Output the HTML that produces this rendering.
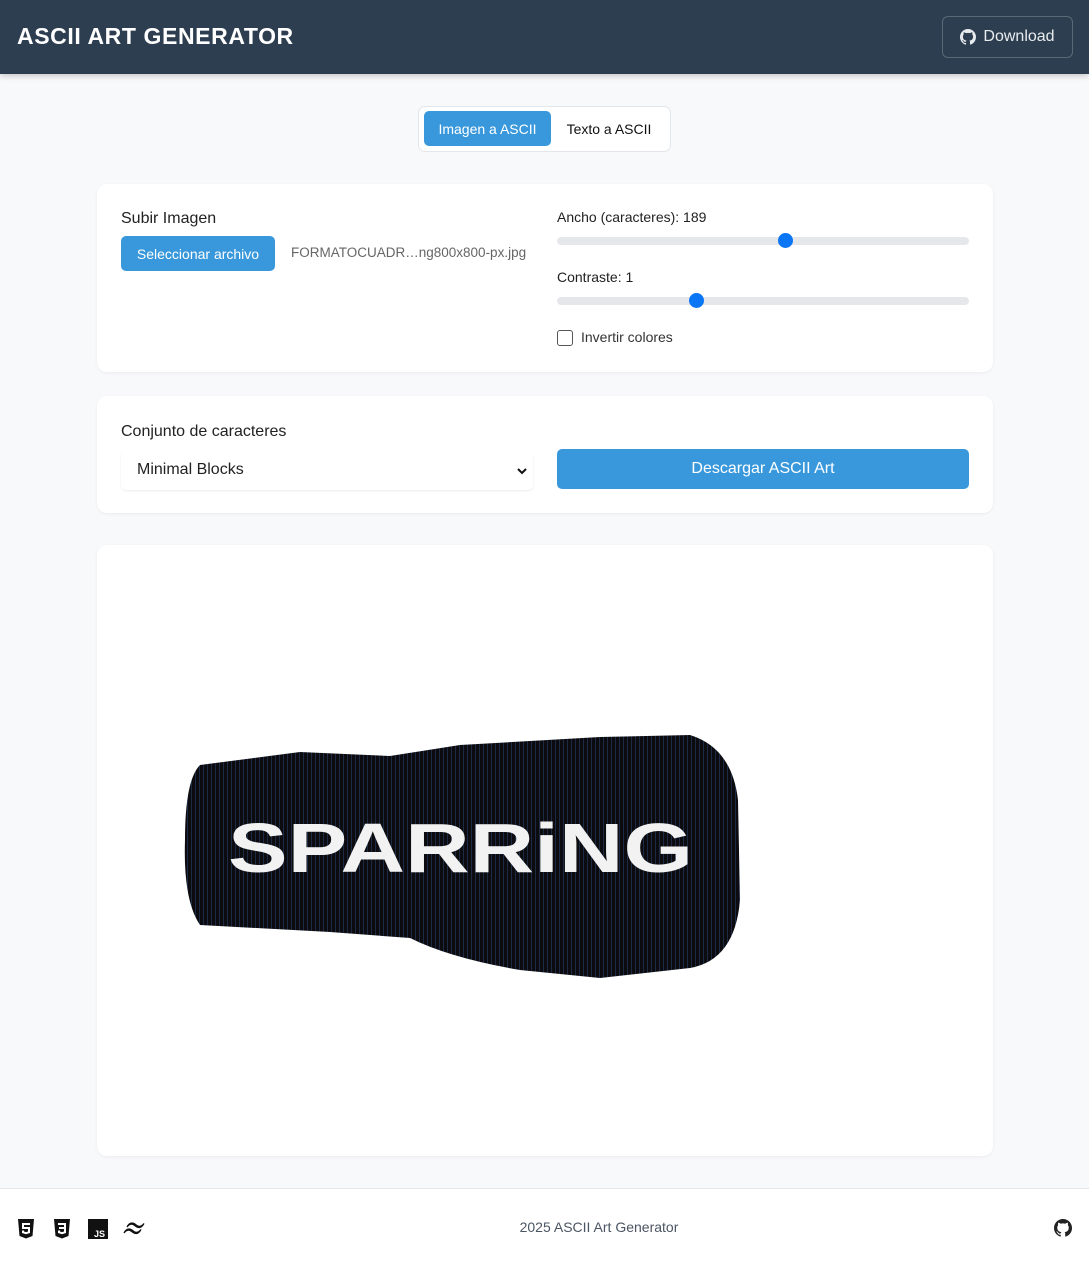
<!DOCTYPE html>
<html><head><meta charset="utf-8">
<style>
*{box-sizing:border-box;margin:0;padding:0}
body{width:1089px;height:1268px;background:#f8f9fb;font-family:"Liberation Sans",sans-serif;color:#222;position:relative;overflow:hidden}
header{position:absolute;left:0;top:0;width:1089px;height:74px;background:#2d3e50;box-shadow:0 2px 6px rgba(0,0,0,.2)}
header h1{position:absolute;left:17px;top:23px;color:#fff;font-size:23px;font-weight:bold;letter-spacing:.6px}
.dl{position:absolute;left:942px;top:16px;width:131px;height:42px;border:1px solid #5b6977;border-radius:6px;color:#e8ecef;font-size:16px;display:flex;align-items:center;justify-content:center;gap:7px}
.tabs{position:absolute;left:418px;top:106px;width:253px;height:46px;background:#fff;border:1px solid #e3e6ea;border-radius:7px}
.tab1{position:absolute;left:5px;top:4px;width:127px;height:35px;background:#3898db;border-radius:5px;color:#fff;font-size:14px;display:flex;align-items:center;justify-content:center}
.tab2{position:absolute;left:135px;top:4px;width:110px;height:35px;color:#111;font-size:14px;display:flex;align-items:center;justify-content:center}
.card{position:absolute;left:97px;width:896px;background:#fff;border-radius:10px;box-shadow:0 1px 3px rgba(0,0,0,.06)}
.lbl{position:absolute;font-size:16px;color:#222}
.sm{position:absolute;font-size:14px;color:#222}
.btn{position:absolute;background:#3898db;color:#fff;border-radius:5px;display:flex;align-items:center;justify-content:center}
.track{position:absolute;height:8px;background:#e5e7eb;border-radius:4px}
.thumb{position:absolute;width:15px;height:15px;background:#0b76f5;border-radius:50%}
footer{position:absolute;left:0;top:1188px;width:1089px;height:80px;background:#fff;border-top:1px solid #e5e7eb}
</style></head><body>
<header>
<h1>ASCII ART GENERATOR</h1>
<div class="dl"><svg width="16" height="16" viewBox="0 0 16 16"><path fill="#e8ecef" d="M8 0C3.58 0 0 3.58 0 8c0 3.54 2.29 6.53 5.47 7.59.4.07.55-.17.55-.38v-1.33c-2.23.48-2.7-1.07-2.7-1.07-.36-.93-.89-1.170-.89-1.17-.73-.5.05-.49.05-.49.8.06 1.23.83 1.23.83.72 1.23 1.87.87 2.33.67.07-.52.28-.87.51-1.07-1.78-.2-3.65-.89-3.65-3.95 0-.87.31-1.59.82-2.15-.08-.2-.36-1.02.08-2.12 0 0 .67-.21 2.2.82a7.6 7.6 0 014 0c1.53-1.04 2.2-.82 2.2-.82.44 1.1.16 1.92.08 2.12.51.56.82 1.27.82 2.15 0 3.07-1.87 3.75-3.65 3.95.29.25.54.73.54 1.48v2.2c0 .21.15.46.55.38A8 8 0 0016 8c0-4.42-3.58-8-8-8z"/></svg>Download</div>
</header>
<div class="tabs"><div class="tab1">Imagen a ASCII</div><div class="tab2">Texto a ASCII</div></div>

<div class="card" style="top:184px;height:188px">
<div class="lbl" style="left:24px;top:26px">Subir Imagen</div>
<div class="btn" style="left:24px;top:52px;width:154px;height:35px;font-size:14px">Seleccionar archivo</div>
<div style="position:absolute;left:194px;top:61px;font-size:13.5px;color:#666">FORMATOCUADR…ng800x800-px.jpg</div>
<div class="sm" style="left:460px;top:25px">Ancho (caracteres): 189</div>
<div class="track" style="left:460px;top:53px;width:412px"></div>
<div class="thumb" style="left:681px;top:49px"></div>
<div class="sm" style="left:460px;top:85px">Contraste: 1</div>
<div class="track" style="left:460px;top:113px;width:412px"></div>
<div class="thumb" style="left:592px;top:109px"></div>
<div style="position:absolute;left:460px;top:146px;width:16px;height:16px;border:1px solid #555;border-radius:3px"></div>
<div class="sm" style="left:484px;top:145px;color:#333">Invertir colores</div>
</div>

<div class="card" style="top:396px;height:117px">
<div class="lbl" style="left:24px;top:27px">Conjunto de caracteres</div>
<div style="position:absolute;left:24px;top:55px;width:412px;height:39px;border-radius:5px;box-shadow:0 1px 2px rgba(0,0,0,.08);font-size:16px;padding:10px 16px">Minimal Blocks<svg style="position:absolute;right:6px;top:16px" width="10" height="8" viewBox="0 0 10 8"><path d="M1 2l4 4 4-4" stroke="#111" stroke-width="2" fill="none"/></svg></div>
<div class="btn" style="left:460px;top:53px;width:412px;height:40px;font-size:16px">Descargar ASCII Art</div>
</div>

<div class="card" style="top:545px;height:611px">
<svg style="position:absolute;left:0;top:0" width="896" height="611" viewBox="97 545 896 611">
<defs><pattern id="st" width="4" height="4" patternUnits="userSpaceOnUse"><rect width="4" height="4" fill="#0b0b10"/><rect x="3" width="1" height="4" fill="#1c2a44"/></pattern></defs>
<path fill="url(#st)" d="M200,765 L300,752 L390,756 L460,745 L600,737 L690,735 Q732,748 738,800 L740,900 Q735,960 690,968 L600,978 L520,970 Q450,958 410,938 L330,932 L200,925 Q183,900 185,840 Q185,780 200,765 Z"/>
<text x="228" y="872" textLength="465" lengthAdjust="spacingAndGlyphs" font-family="Liberation Sans" font-weight="bold" font-size="70" fill="#f2f2f2">SPARRiNG</text>
</svg>
</div>

<footer>
<svg style="position:absolute;left:17px;top:30px" width="18" height="20" viewBox="0 0 18 20"><path d="M1 0h16l-1.5 17L9 19.5 2.5 17z" fill="#111"/><path d="M5 4h8v2H7v2h6v6l-4 1.3L5 14v-2.5h2v1l2 .6 2-.6V10H5z" fill="#fff"/></svg>
<svg style="position:absolute;left:53px;top:30px" width="18" height="20" viewBox="0 0 18 20"><path d="M1 0h16l-1.5 17L9 19.5 2.5 17z" fill="#111"/><path d="M5 4h8v10l-4 1.3L5 14v-2.5h2v1l2 .6 2-.6V10H6V8h5V6H5z" fill="#fff"/></svg>
<svg style="position:absolute;left:88px;top:30px" width="20" height="20" viewBox="0 0 20 20"><rect width="20" height="20" fill="#111"/><text x="6" y="18" font-family="Liberation Sans" font-weight="bold" font-size="9" fill="#fff">JS</text></svg>
<svg style="position:absolute;left:123px;top:32px" width="22" height="16" viewBox="0 0 22 16"><path d="M4 6c2-4 5-5 8-3 2 1.5 3 3 6 2 1-.4 2-1.2 3-2.5-2 4-5 5-8 3-2-1.5-3-3-6-2-1 .4-2 1.2-3 2.5zM1 12c2-4 5-5 8-3 2 1.5 3 3 6 2 1-.4 2-1.2 3-2.5-2 4-5 5-8 3-2-1.5-3-3-6-2-1 .4-2 1.2-3 2.5z" fill="#111" stroke="#111" stroke-width="1.2"/></svg>
<div style="position:absolute;left:0;width:1089px;top:30px;text-align:center;padding-left:109px;font-size:14px;color:#4b5563">2025 ASCII Art Generator</div>
<svg style="position:absolute;left:1054px;top:30px" width="18" height="18" viewBox="0 0 16 16"><path fill="#222" d="M8 0C3.58 0 0 3.58 0 8c0 3.54 2.29 6.53 5.47 7.590.4.07.55-.17.55-.38v-1.33c-2.23.48-2.7-1.07-2.7-1.07-.36-.93-.89-1.17-.89-1.17-.73-.5.05-.49.05-.49.8.06 1.23.83 1.23.83.72 1.23 1.87.87 2.33.67.07-.52.28-.87.51-1.07-1.78-.2-3.65-.89-3.65-3.95 0-.87.31-1.59.82-2.15-.08-.2-.36-1.02.08-2.12 0 0 .67-.21 2.2.82a7.6 7.6 0 014 0c1.53-1.04 2.2-.82 2.2-.82.44 1.1.16 1.92.08 2.12.51.56.82 1.27.82 2.15 0 3.07-1.87 3.75-3.65 3.95.29.25.54.73.54 1.48v2.2c0 .21.15.46.55.38A8 8 0 0016 8c0-4.42-3.58-8-8-8z"/></svg>
</footer>
</body></html>
